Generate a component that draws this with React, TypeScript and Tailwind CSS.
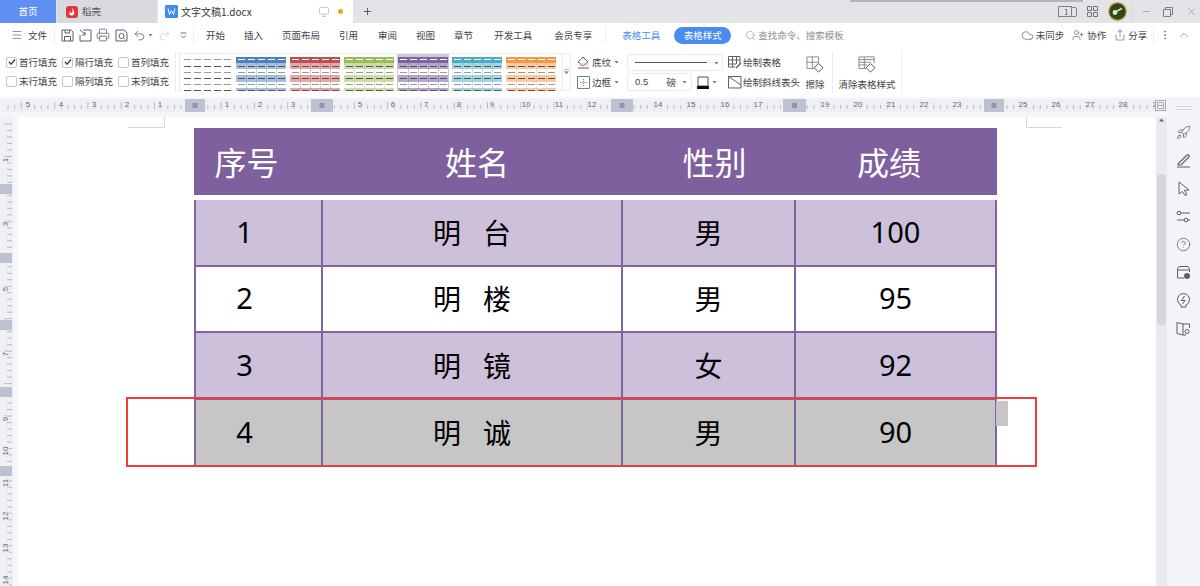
import { ChevronUp, CircleHelp, Cloud, Menu, Minus, MoreVertical, Plus, Printer, Redo2, Rocket, Search, Share, Undo2, UserPlus, X } from 'lucide-react';

const cjk = { fontFamily: '"Noto Sans CJK SC", "Liberation Sans", sans-serif' };

const Caret = () => (
  <svg width="5" height="4" viewBox="0 0 5 4" className="shrink-0">
    <path d="M0.5 1 L4.5 1 L2.5 3.5 Z" fill="#777" />
  </svg>
);

const MenuItem = ({ label, x }: { label: string; x: string }) => (
  <span className={`whitespace-nowrap text-[9.5px] text-[#444] ${x}`}>{label}</span>
);

const Tabs = () => (
  <div className="relative flex h-[23px] shrink-0 bg-[#e3e4e8]">
    <div className="flex w-[56px] items-center justify-center bg-[#5f8ff2] text-[9.5px] text-white">首页</div>
    <div className="ml-px flex w-[100px] items-center gap-[4px] bg-[#d9dadf] pl-[9px] text-[9.5px] text-[#555]">
      <svg width="12" height="12" viewBox="0 0 12 12">
        <rect width="12" height="12" rx="3" fill="#e0353b" />
        <path d="M6.5 2 C8 5 9 6 8 8 C7 10 4 10 3.5 8 C3.2 6.5 4 5.5 4.5 5 C4.5 6.5 5 7.5 6 7 C7 6 6 4 6.5 2 Z" fill="#fff" />
      </svg>
      稻壳
    </div>
    <div className="ml-px flex w-[195px] items-center whitespace-nowrap bg-white pl-[7px] text-[10px] text-[#333]">
      <svg width="13" height="13" viewBox="0 0 13 13" className="shrink-0">
        <rect width="13" height="13" rx="1.5" fill="#3f8cf0" />
        <path d="M3 3.5 L4.5 9.5 L6.5 5.5 L8.5 9.5 L10 3.5" fill="none" stroke="#fff" strokeWidth="1" />
      </svg>
      <span className="ml-[3px] w-[68px]">文字文稿1.docx</span>
      <svg width="10" height="10" viewBox="0 0 10 10" className="ml-[70px] shrink-0">
        <rect x="0.5" y="0.5" width="9" height="6.5" rx="1" fill="none" stroke="#c9c9c9" />
        <path d="M5 7 V9.5 M3 9.5 H7" stroke="#c9c9c9" />
      </svg>
      <span className="ml-[9px] h-[5px] w-[5px] shrink-0 rounded-full bg-[#f0a020]" />
    </div>
    <Plus className="ml-[9px] mt-[6px] h-[11px] w-[11px] text-[#4a5366]" strokeWidth={2} />
    <div className="ml-auto flex items-center text-[#7a7f8c]">
      <svg width="19" height="11" viewBox="0 0 19 11" className="mr-[10px]">
        <rect x="0.5" y="0.5" width="13" height="10" fill="none" stroke="#7a7f8c" />
        <rect x="13.5" y="1.5" width="5" height="9" rx="1" fill="#e3e4e8" stroke="#7a7f8c" />
        <text x="6" y="8.5" fontSize="8" fill="#555">1</text>
      </svg>
      <svg width="11" height="11" viewBox="0 0 11 11" className="mr-[10px]">
        <path d="M0.5 0.5h4v4h-4z M6.5 0.5h4v4h-4z M0.5 6.5h4v4h-4z M6.5 6.5h4v4h-4z" fill="none" stroke="#6e7380" />
      </svg>
      <svg width="19" height="19" viewBox="0 0 19 19" className="mr-[5px]">
        <circle cx="9.5" cy="9.5" r="8.8" fill="#2f4a17" stroke="#c9a24a" strokeWidth="1.2" />
        <circle cx="7" cy="10.5" r="2.4" fill="#dfe8cc" />
        <path d="M9 9 L14 6.5" stroke="#dfe8cc" strokeWidth="1.4" />
      </svg>
      <div className="mr-[8px] h-[16px] w-px bg-[#d6d7db]" />
      <Minus className="mr-[11px] h-[11px] w-[11px]" strokeWidth={1.2} />
      <svg width="10" height="10" viewBox="0 0 10 10" className="mr-[13px]">
        <path d="M2.5 2.5 V0.5 H9.5 V7.5 H7.5 M0.5 2.5 H7.5 V9.5 H0.5 Z" fill="none" stroke="#7a7f8c" />
      </svg>
      <X className="mr-[3px] h-[11px] w-[11px]" strokeWidth={1.2} />
    </div>
    <div className="absolute left-[850px] top-0 h-[2px] w-[233px] bg-[#b5b6ba]" />
  </div>
);

const MenuBar = () => (
  <div className="flex h-[24px] shrink-0 items-center bg-white text-[#5a5f6a]">
    <Menu className="ml-[11px] h-[12px] w-[12px]" strokeWidth={1.3} />
    <span className="ml-[5px] whitespace-nowrap text-[9.5px] text-[#444]">文件</span>
    <div className="ml-[7px] h-[16px] w-px bg-[#eceef1]" />
    <svg width="13" height="13" viewBox="0 0 13 13" className="ml-[6px]">
      <path d="M1 1 H10 L12 3 V12 H1 Z M3.5 12 V7.5 H9.5 V12 M4 1 V4 H8.5 V1" fill="none" stroke="#5a5f6a" />
    </svg>
    <svg width="13" height="13" viewBox="0 0 13 13" className="ml-[5px]">
      <path d="M4 1 H12 V12 H1 V6 M1 1 L6 5 M3 6 H6 V3" fill="none" stroke="#5a5f6a" />
    </svg>
    <Printer className="ml-[4px] h-[14px] w-[14px]" strokeWidth={1.3} />
    <svg width="13" height="13" viewBox="0 0 13 13" className="ml-[5px]">
      <path d="M1 1 H9 L12 4 V12 H1 Z" fill="none" stroke="#5a5f6a" />
      <circle cx="6.5" cy="7" r="2.5" fill="none" stroke="#5a5f6a" />
      <path d="M8.5 9 L10 10.5" stroke="#5a5f6a" />
    </svg>
    <Undo2 className="ml-[5px] h-[13px] w-[13px]" strokeWidth={1.4} />
    <div className="ml-[2px]"><Caret /></div>
    <Redo2 className="ml-[5px] h-[13px] w-[13px] text-[#c9ccd2]" strokeWidth={1.4} />
    <svg width="7" height="7" viewBox="0 0 7 7" className="ml-[9px]">
      <path d="M0.5 1 H6.5 M1 3.5 L3.5 6 L6 3.5" fill="none" stroke="#777" />
    </svg>
    <div className="ml-[6px] h-[16px] w-px bg-[#eceef1]" />
    <MenuItem label="开始" x="ml-[12px]" />
    <MenuItem label="插入" x="ml-[19px]" />
    <MenuItem label="页面布局" x="ml-[19px]" />
    <MenuItem label="引用" x="ml-[19px]" />
    <MenuItem label="审阅" x="ml-[20px]" />
    <MenuItem label="视图" x="ml-[19px]" />
    <MenuItem label="章节" x="ml-[19px]" />
    <MenuItem label="开发工具" x="ml-[21px]" />
    <MenuItem label="会员专享" x="ml-[22px]" />
    <div className="ml-[13px] h-[16px] w-px bg-[#eceef1]" />
    <span className="ml-[16px] whitespace-nowrap text-[9.5px] text-[#4a8fee]">表格工具</span>
    <span className="ml-[14px] flex h-[17px] w-[57px] items-center justify-center rounded-full bg-[#4a8bef] text-[9.5px] text-white">表格样式</span>
    <Search className="ml-[14px] h-[11px] w-[11px] text-[#8a8f9a]" strokeWidth={1.3} />
    <span className="ml-[2px] whitespace-nowrap text-[9.5px] text-[#8a8f9a]">查找命令、搜索模板</span>
    <Cloud className="ml-[177px] h-[13px] w-[13px]" strokeWidth={1.3} />
    <span className="ml-[2px] whitespace-nowrap text-[9.5px] text-[#444]">未同步</span>
    <UserPlus className="ml-[8px] h-[12px] w-[12px]" strokeWidth={1.3} />
    <span className="ml-[3px] whitespace-nowrap text-[9.5px] text-[#444]">协作</span>
    <Share className="ml-[8px] h-[12px] w-[12px]" strokeWidth={1.3} />
    <span className="ml-[2px] whitespace-nowrap text-[9.5px] text-[#444]">分享</span>
    <div className="ml-[6px] h-[16px] w-px bg-[#eceef1]" />
    <MoreVertical className="ml-[5px] h-[12px] w-[12px]" strokeWidth={1.3} />
    <ChevronUp className="ml-[6px] h-[14px] w-[14px]" strokeWidth={1} />
  </div>
);

const Check = ({ label, on }: { label: string; on?: boolean }) => (
  <label className="flex w-[56px] items-center gap-[2px] whitespace-nowrap text-[9.5px] leading-[14px] text-[#444]">
    <span className="flex h-[11px] w-[11px] shrink-0 items-center justify-center rounded-[2px] border border-[#c4c6cb] bg-white">
      {on && (
        <svg width="8" height="8" viewBox="0 0 8 8">
          <path d="M1 4 L3.2 6.2 L7 1.5" fill="none" stroke="#333" strokeWidth="1.2" />
        </svg>
      )}
    </span>
    {label}
  </label>
);

const Thumb = ({ head, band, selected }: { head?: string; band?: string; selected?: boolean }) => {
  const ys = [5, 12, 18, 24, 30, 36];
  const cols = [1, 11, 21, 31, 41];
  return (
    <div className={`h-[37px] shrink-0 overflow-hidden ${selected ? '-mx-px w-[52px] bg-[#c9cad2] px-px' : 'w-[50px]'}`}>
      <svg width="50" height="37" viewBox="0 0 50 37" className="block">
        {head && <rect x="0" y="3" width="50" height="6" fill={head} />}
        {band && <rect x="0" y="9" width="50" height="6" fill={band} />}
        {band && <rect x="0" y="15" width="50" height="6" fill="#fff" />}
        {band && <rect x="0" y="21" width="50" height="7" fill={band} />}
        {band && <rect x="0" y="28" width="50" height="6" fill="#fff" />}
        {band && <rect x="0" y="34" width="50" height="3" fill={band} />}
        {band && [10, 20, 30, 40].map((x) => <rect key={x} x={x} y="9" width="1" height="28" fill={head} opacity="0.3" />)}
        {ys.map((y, i) =>
          cols.map((x) => (
            <rect key={`${x}-${y}`} x={x + 1} y={y} width="7" height="1" fill={i === 0 && head ? '#fff' : i % 2 ? '#555' : '#999'} />
          )),
        )}
      </svg>
    </div>
  );
};

const Ribbon = () => (
  <div className="flex h-[50px] shrink-0 bg-white">
    <div className="ml-[6px] flex w-[168px] flex-col gap-[5px] pt-[8px]">
      <div className="flex items-center"><Check label="首行填充" on /><Check label="隔行填充" on /><Check label="首列填充" /></div>
      <div className="flex items-center"><Check label="末行填充" /><Check label="隔列填充" /><Check label="末列填充" /></div>
    </div>
    <div className="ml-px mt-[4px] h-[42px] w-px bg-[#eceef1]" />
    <div className="ml-[3px] mt-[6px] flex h-[38px] w-[392px] items-center gap-[4px] border border-[#ebecef] pl-[2px]">
      <Thumb />
      <Thumb head="#4f81bd" band="#a7c0de" />
      <Thumb head="#c0504d" band="#e5a9a7" />
      <Thumb head="#9bbb59" band="#cddda9" />
      <Thumb head="#8064a2" band="#b8a7cc" selected />
      <Thumb head="#4bacc6" band="#a5d5e2" />
      <Thumb head="#f79646" band="#fbcba2" />
      <div className="ml-[2px] flex h-full flex-1 items-center justify-center border-l border-[#ebecef]">
        <svg width="5" height="6" viewBox="0 0 5 6"><path d="M0 0.5 H5 M0.5 2.5 L2.5 5 L4.5 2.5 Z" fill="#888" stroke="#888" strokeWidth="0.5" /></svg>
      </div>
    </div>
    <div className="ml-[6px] mt-[8px] flex w-[45px] flex-col gap-[6px] text-[9.5px] leading-[14px] text-[#444]">
      <div className="flex items-center">
        <svg width="13" height="13" viewBox="0 0 13 13" className="mr-[2px]"><path d="M6 1 L11 6 L6 10 L1 6 Z M1 12 H12" fill="none" stroke="#5a5f6a" /><path d="M1 7 L11 7 L12 10 H2 Z" fill="#e8b4b0" opacity="0.5" /></svg>
        底纹<span className="ml-[3px]"><Caret /></span>
      </div>
      <div className="flex items-center">
        <svg width="13" height="13" viewBox="0 0 13 13" className="mr-[2px]"><path d="M0.5 0.5 H12.5 V12.5 H0.5 Z" fill="none" stroke="#7a7f8c" /><path d="M6.5 3 V10 M3 6.5 H10" stroke="#7a7f8c" strokeDasharray="1 1" /></svg>
        边框<span className="ml-[3px]"><Caret /></span>
      </div>
    </div>
    <div className="ml-[5px] mt-[7px] flex w-[96px] flex-col gap-[2px]">
      <div className="flex h-[17px] items-center rounded-[2px] border border-[#ebecef] pl-[7px] pr-[3px]">
        <div className="h-px w-[72px] bg-[#555]" />
        <div className="ml-auto"><Caret /></div>
      </div>
      <div className="flex items-center">
        <div className="flex h-[18px] w-[65px] items-center rounded-[2px] border border-[#ebecef] pl-[7px] pr-[4px] text-[9.5px] text-[#444]">
          <span style={{ fontFamily: '"Liberation Sans", sans-serif' }}>0.5</span>
          <span className="ml-auto mr-[6px]">磅</span>
          <Caret />
        </div>
        <svg width="12" height="13" viewBox="0 0 12 13" className="ml-[5px]">
          <path d="M1 1 H11 V10 H1 Z" fill="none" stroke="#555" />
          <rect x="0" y="10" width="12" height="3" fill="#111" />
        </svg>
        <div className="ml-[3px]"><Caret /></div>
      </div>
    </div>
    <div className="ml-[5px] mt-[8px] flex w-[72px] flex-col gap-[6px] whitespace-nowrap text-[9.5px] leading-[14px] text-[#444]">
      <div className="flex items-center gap-[1px]">
        <svg width="14" height="13" viewBox="0 0 14 13"><path d="M0.5 0.5 H12 V8 M0.5 0.5 V11 H7 M0.5 4 H12 M4.5 0.5 V11 M8.5 0.5 V8 M0.5 8 H8" fill="none" stroke="#5a5f6a" /><path d="M8 12 L13 7" stroke="#5a5f6a" strokeWidth="1.5" /></svg>
        绘制表格
      </div>
      <div className="flex items-center gap-[1px]">
        <svg width="14" height="13" viewBox="0 0 14 13"><path d="M0.5 0.5 H13 V12 H0.5 Z M0.5 0.5 L13 9" fill="none" stroke="#5a5f6a" /></svg>
        绘制斜线表头
      </div>
    </div>
    <div className="ml-[5px] mt-[9px] flex w-[20px] flex-col items-center text-[9.5px] leading-[12px] text-[#444]">
      <svg width="20" height="17" viewBox="0 0 20 19"><path d="M14 11 V1 H1 V14 H9 M1 7 H14 M7 1 V14" fill="none" stroke="#7a7f8c" /><path d="M9 13 L14 8.5 L19 13 L14 18 Z" fill="#fff" stroke="#444" /></svg>
      <span className="mt-[5px] whitespace-nowrap">擦除</span>
    </div>
    <div className="ml-[7px] mt-[4px] h-[42px] w-px bg-[#eceef1]" />
    <div className="ml-[5px] mt-[9px] flex w-[58px] flex-col items-center text-[9.5px] leading-[12px] text-[#444]">
      <svg width="20" height="17" viewBox="0 0 20 19"><path d="M18 8 V1 H1 V14 H9 M1 4 H18 M1 7 H14 M1 10 H10 M7 1 V14" fill="none" stroke="#7a7f8c" /><path d="M9 13 L14 8.5 L19 13 L14 18 Z" fill="#fff" stroke="#444" /></svg>
      <span className="mt-[5px] whitespace-nowrap">清除表格样式</span>
    </div>
    <div className="ml-[5px] mt-[4px] h-[42px] w-px bg-[#eceef1]" />
  </div>
);

const hLabels: [string, number][] = [['5', 28], ['4', 61], ['3', 94], ['2', 127], ['1', 160], ['1', 227], ['2', 260], ['3', 293], ['5', 360], ['6', 393], ['7', 426], ['8', 459], ['9', 492], ['10', 526], ['11', 559], ['12', 592], ['14', 658], ['15', 691], ['16', 725], ['17', 758], ['19', 825], ['20', 858], ['21', 891], ['22', 924], ['23', 957], ['25', 1023], ['26', 1056], ['27', 1090], ['28', 1123], ['2', 1155]];
const hBlocks: [number, number][] = [[185, 20], [311, 22], [611, 22], [783, 23], [984, 20]];
const vLabels: [string, number][] = [['1', 160], ['3', 224], ['5', 289], ['7', 354], ['9', 419], ['10', 451], ['11', 483], ['12', 516], ['13', 548], ['14', 580]];
const vBlocks: [number, number][] = [[184, 10], [253, 10], [320, 10], [387, 10], [466, 10]];

const HRuler = () => (
  <div className="h-[20px] shrink-0 bg-[#f5f6f9] pt-[2px]">
    <svg width="1167" height="13" viewBox="0 0 1167 13" className="block bg-[#eef0f4]">
      {Array.from({ length: 173 }, (_, i) => {
        const x = 8 + i * 6.66;
        const long = i % 5 === 2;
        return <line key={i} x1={x} x2={x} y1={long ? 3 : 6} y2="10" stroke="#a9adb8" strokeWidth="0.8" />;
      })}
      {hBlocks.map(([x, w]) => (
        <g key={x}>
          <rect x={x} y="0" width={w} height="13" fill="#bcc2d2" />
          <rect x={x + w / 2 - 2.5} y="4" width="5" height="5" fill="#8f95a8" />
        </g>
      ))}
      {hLabels.map(([t, x]) => (
        <text key={x} x={x} y="8" fontSize="8" textAnchor="middle" fill="#666" stroke="#eef0f4" strokeWidth="2" paintOrder="stroke" fontFamily="Liberation Sans, sans-serif">{t}</text>
      ))}
      <rect x="1155.5" y="1.5" width="10" height="10" fill="#eef0f4" stroke="#a9adb8" />
      <path d="M1157.5 3.5 H1163.5 V9.5 H1157.5 Z M1157.5 6.5 H1163.5" fill="none" stroke="#a9adb8" />
    </svg>
  </div>
);

const VRuler = () => (
  <div className="w-[18px] shrink-0 bg-[#f5f6f9]">
    <svg width="13" height="469" viewBox="0 117 13 469" className="block bg-[#eef0f4]">
      {Array.from({ length: 72 }, (_, i) => {
        const y = 124 + i * 6.49;
        const long = i % 5 === 0;
        return <line key={i} y1={y} y2={y} x1={long ? 4 : 7} x2="12" stroke="#a9adb8" strokeWidth="0.8" />;
      })}
      {vBlocks.map(([y, h]) => <rect key={y} x="0" y={y} width="12" height={h} fill="#bcc2d2" />)}
      {vLabels.map(([t, y]) => (
        <text key={y} x="6" y={y} fontSize="8" textAnchor="middle" fill="#666" stroke="#eef0f4" strokeWidth="2" paintOrder="stroke" transform={`rotate(-90 6 ${y})`} dominantBaseline="middle" fontFamily="Liberation Sans, sans-serif">{t}</text>
      ))}
    </svg>
  </div>
);

const num = { fontFamily: '"Noto Sans", sans-serif' };

const Row = ({ no, name, sex, score, bg, h }: { no: string; name: string; sex: string; score: string; bg: string; h: string }) => (
  <div className={`grid grid-cols-[127px_300px_173px_199px] border-x-2 border-b-2 border-[#8064a2] text-black ${bg} ${h}`}>
    <div className="flex items-center justify-center border-r-2 border-[#8064a2] pb-[2px] pr-[28px] text-[29px]" style={num}>{no}</div>
    <div className="flex items-center justify-center gap-[22px] border-r-2 border-[#8064a2] pb-[2px] text-[28px]">
      {name.split(' ').map((c) => <span key={c}>{c}</span>)}
    </div>
    <div className="flex items-center justify-center border-r-2 border-[#8064a2] pb-[2px] text-[28px]">{sex}</div>
    <div className="flex items-center justify-center pb-[2px] text-[29px]" style={num}>{score}</div>
  </div>
);

const DataTable = () => (
  <div className="ml-[176px] mt-[11px] w-[803px]" style={cjk}>
    <div className="grid h-[67px] grid-cols-[129px_300px_173px_201px] items-center bg-[#7f609e] pb-[2px] text-[32px] text-white">
      <div className="pr-[24px] text-center">序号</div>
      <div className="pl-[8px] text-center">姓名</div>
      <div className="pl-[10px] text-center">性别</div>
      <div className="pr-[15px] text-center">成绩</div>
    </div>
    <div className="h-[5px] bg-white" />
    <Row no="1" name="明 台" sex="男" score="100" bg="bg-[#ccc0da]" h="h-[67px]" />
    <Row no="2" name="明 楼" sex="男" score="95" bg="bg-white" h="h-[66px]" />
    <Row no="3" name="明 镜" sex="女" score="92" bg="bg-[#ccc0da]" h="h-[67px]" />
    <div className="relative">
      <Row no="4" name="明 诚" sex="男" score="90" bg="bg-[#c6c6c6]" h="h-[67px]" />
      <div className="absolute left-[802px] top-[1px] h-[25px] w-[12px] bg-[#c6c6c6]" />
      <div className="absolute -left-[68px] -top-[3px] h-[70px] w-[911px] border-2 border-[#f13b3b]" />
    </div>
  </div>
);

const Sidebar = () => (
  <div className="flex w-[33px] shrink-0 flex-col items-center bg-[#f3f4f7] pt-[9px] text-[#5a5f6a]">
    <div className="h-[4px] w-[16px] border-y border-[#d3d5da]" />
    <Rocket className="mt-[15px] h-[15px] w-[15px]" strokeWidth={1.2} />
    <svg width="15" height="15" viewBox="0 0 15 15" className="mt-[13px]">
      <path d="M1 14 H14 M2 11 L11 2 C12 1 14 3 13 4 L5 12 H2 Z" fill="none" stroke="#5a5f6a" strokeWidth="1.1" />
    </svg>
    <svg width="15" height="15" viewBox="0 0 15 15" className="mt-[13px]">
      <path d="M3 1 L13 9 L8.5 9.5 L11 13.5 L9 14.5 L6.5 10.5 L3 13 Z" fill="none" stroke="#5a5f6a" />
    </svg>
    <svg width="15" height="15" viewBox="0 0 15 15" className="mt-[13px]">
      <circle cx="3" cy="4" r="1.8" fill="none" stroke="#5a5f6a" />
      <circle cx="10" cy="11" r="1.8" fill="none" stroke="#5a5f6a" />
      <path d="M5 4 H14 M1 11 H8 M12 11 H14" stroke="#5a5f6a" />
    </svg>
    <CircleHelp className="mt-[13px] h-[15px] w-[15px]" strokeWidth={1.2} />
    <svg width="15" height="15" viewBox="0 0 15 15" className="mt-[13px]">
      <path d="M8 13 H1.5 V4 L3 1.5 H12 L13.5 4 V7 M1.5 5 H13.5" fill="none" stroke="#5a5f6a" />
      <circle cx="11" cy="11" r="3" fill="#5a5f6a" />
    </svg>
    <svg width="15" height="15" viewBox="0 0 15 15" className="mt-[13px]">
      <path d="M5 12 A6 6 0 1 1 10 12 V14 H5 Z" fill="none" stroke="#5a5f6a" />
      <path d="M8.5 3 L5.5 7.5 H9 L6.5 11" fill="none" stroke="#5a5f6a" />
    </svg>
    <svg width="15" height="15" viewBox="0 0 15 15" className="mt-[13px]">
      <path d="M7 3 L1 1.5 V12.5 L7 14 V3 H13.5 V7 M7 14 H10" fill="none" stroke="#5a5f6a" />
      <circle cx="11" cy="10.5" r="2" fill="none" stroke="#5a5f6a" />
    </svg>
  </div>
);

export default function App() {
  return (
    <div className="flex h-[586px] w-[1200px] flex-col overflow-hidden bg-white" style={cjk}>
      <Tabs />
      <MenuBar />
      <Ribbon />
      <div className="flex min-h-0 flex-1">
        <div className="flex w-[1167px] flex-col">
          <HRuler />
          <div className="flex min-h-0 flex-1">
            <VRuler />
            <div className="relative flex-1 bg-white">
              <div className="absolute left-[110px] top-0 h-[11px] w-[37px] border-b border-r border-[#d8d8d8]" />
              <div className="absolute left-[1008px] top-0 h-[11px] w-[36px] border-b border-l border-[#d8d8d8]" />
              <DataTable />
            </div>
            <div className="flex w-[11px] shrink-0 flex-col items-center bg-[#e9eaf0]">
              <svg width="5" height="4" viewBox="0 0 5 4" className="mt-[1px]"><path d="M0 3.5 L2.5 0.5 L5 3.5 Z" fill="#666" /></svg>
              <div className="mt-[52px] h-[151px] w-[9px] rounded-[4px] bg-[#d5d7e0]" />
            </div>
          </div>
        </div>
        <Sidebar />
      </div>
    </div>
  );
}
